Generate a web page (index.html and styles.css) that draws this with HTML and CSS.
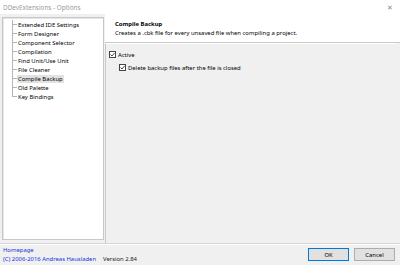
FILE: index.html
```html
<!DOCTYPE html>
<html>
<head>
<meta charset="utf-8">
<link rel="stylesheet" href="styles.css">
</head>
<body>
<div class="window">
  <div class="titlebar">
    <span class="title">DDevExtensions - Options</span>
    <span class="close">✕</span>
  </div>
  <div class="main">
    <div class="tree">
      <div class="items">
        <div class="node"><i class="stem"></i><span class="label">Extended IDE Settings</span></div>
        <div class="node"><i class="stem"></i><span class="label">Form Designer</span></div>
        <div class="node"><i class="stem"></i><span class="label">Component Selector</span></div>
        <div class="node"><i class="stem"></i><span class="label">Compilation</span></div>
        <div class="node"><i class="stem"></i><span class="label">Find Unit/Use Unit</span></div>
        <div class="node"><i class="stem"></i><span class="label">File Cleaner</span></div>
        <div class="node"><i class="stem"></i><span class="label selected">Compile Backup</span></div>
        <div class="node"><i class="stem"></i><span class="label">Old Palette</span></div>
        <div class="node last"><i class="stem"></i><span class="label">Key Bindings</span></div>
      </div>
    </div>
    <div class="content">
      <div class="header">
        <div class="h-title">Compile Backup</div>
        <div class="h-desc">Creates a .cbk file for every unsaved file when compiling a project.</div>
      </div>
      <div class="page">
        <label class="check"><svg class="box" viewBox="0 0 7 7" width="7" height="7"><rect x="0.5" y="0.5" width="6" height="6" fill="#fff" stroke="#444" stroke-width="1"/><path d="M1.5 3.5 L3 5 L5.6 1.9" fill="none" stroke="#333" stroke-width="0.9"/></svg>Active</label>
        <label class="check sub"><svg class="box" viewBox="0 0 7 7" width="7" height="7"><rect x="0.5" y="0.5" width="6" height="6" fill="#fff" stroke="#444" stroke-width="1"/><path d="M1.5 3.5 L3 5 L5.6 1.9" fill="none" stroke="#333" stroke-width="0.9"/></svg>Delete backup files after the file is closed</label>
      </div>
    </div>
  </div>
  <div class="footer">
    <div class="info">
      <div class="line"><a class="link">Homepage</a></div>
      <div class="line copy"><a class="link">(C) 2006-2016 Andreas Hausladen</a><span class="version">Version 2.84</span></div>
    </div>
    <div class="buttons">
      <button class="btn default">OK</button>
      <button class="btn">Cancel</button>
    </div>
  </div>
</div>
</body>
</html>
```
FILE: styles.css
```css
html, body {
  margin: 0;
  padding: 0;
}
body {
  width: 400px;
  height: 265px;
  overflow: hidden;
  background: #f0f0f0;
  font-family: "Noto Sans", "Open Sans", sans-serif;
  font-size: 5.9px;
  color: #000;
}
.window {
  display: flex;
  flex-direction: column;
  height: 265px;
}
.titlebar {
  height: 14px;
  background: #fff;
  display: flex;
  align-items: center;
  justify-content: space-between;
  padding: 0 7px 0 3px;
  color: #9a9a9a;
  flex: none;
}
.title {
  font-size: 6.4px;
}
.close {
  font-size: 7px;
  color: #8a8a8a;
}
.main {
  display: flex;
  height: 229px;
  flex: none;
}
.tree {
  margin: 3px 0 3px 2px;
  width: 102px;
  border: 1px solid #c6c6cc;
  box-shadow: inset 1px 1px 0 #e6e6e6;
  background: #fff;
  box-sizing: border-box;
}
.items {
  margin: 2px 0 0 9px;
  padding: 0;
}
.node {
  display: flex;
  align-items: center;
  height: 9px;
  line-height: 9px;
}
.stem {
  display: block;
  width: 5px;
  height: 9px;
  flex: none;
  background: linear-gradient(#b4b4b4, #b4b4b4) left top / 1px 9px no-repeat,
              linear-gradient(#b4b4b4, #b4b4b4) left 4px / 5px 1px no-repeat;
}
.node.last .stem {
  background: linear-gradient(#b4b4b4, #b4b4b4) left top / 1px 5px no-repeat,
              linear-gradient(#b4b4b4, #b4b4b4) left 4px / 5px 1px no-repeat;
}
.label {
  padding: 0 1px;
  line-height: 8px;
}
.label.selected {
  background: #e2e2e2;
}
.content {
  flex: 1;
  margin-left: 1px;
  display: flex;
  flex-direction: column;
}
.header {
  background: #fff;
  height: 29px;
  padding: 6px 0 0 10px;
  box-sizing: border-box;
  border-bottom: 1px solid #c8c8c8;
}
.h-title {
  font-weight: bold;
  line-height: 9px;
}
.h-desc {
  line-height: 9px;
}
.page {
  flex: 1;
  margin-right: 3px;
  border-top: 1px solid #fff;
  border-left: 1px solid #c8c8c8;
  padding: 6px 0 0 3px;
}
.check {
  display: flex;
  align-items: center;
  height: 9px;
  margin-bottom: 4px;
}
.check.sub {
  margin-left: 10px;
}
.box {
  display: block;
  flex: none;
  margin-right: 2px;
}
.footer {
  flex: 1;
  border-top: 1px solid #d6d6d6;
  box-shadow: inset 0 1px 0 #fff;
  display: flex;
  justify-content: space-between;
  align-items: flex-start;
  padding: 2px 5px 0 3px;
}
.line {
  height: 9px;
  line-height: 9px;
}
.link {
  color: #2030e0;
  text-decoration: none;
}
.copy {
  display: flex;
}
.version {
  margin-left: 7px;
  color: #222;
}
.buttons {
  display: flex;
  gap: 5px;
  margin-top: 2px;
}
.btn {
  width: 41px;
  height: 13px;
  padding: 0;
  font-family: inherit;
  font-size: 5.9px;
  background: #e1e1e1;
  border: 1px solid #adadad;
  color: #000;
}
.btn.default {
  border-color: #0078d7;
}
```
